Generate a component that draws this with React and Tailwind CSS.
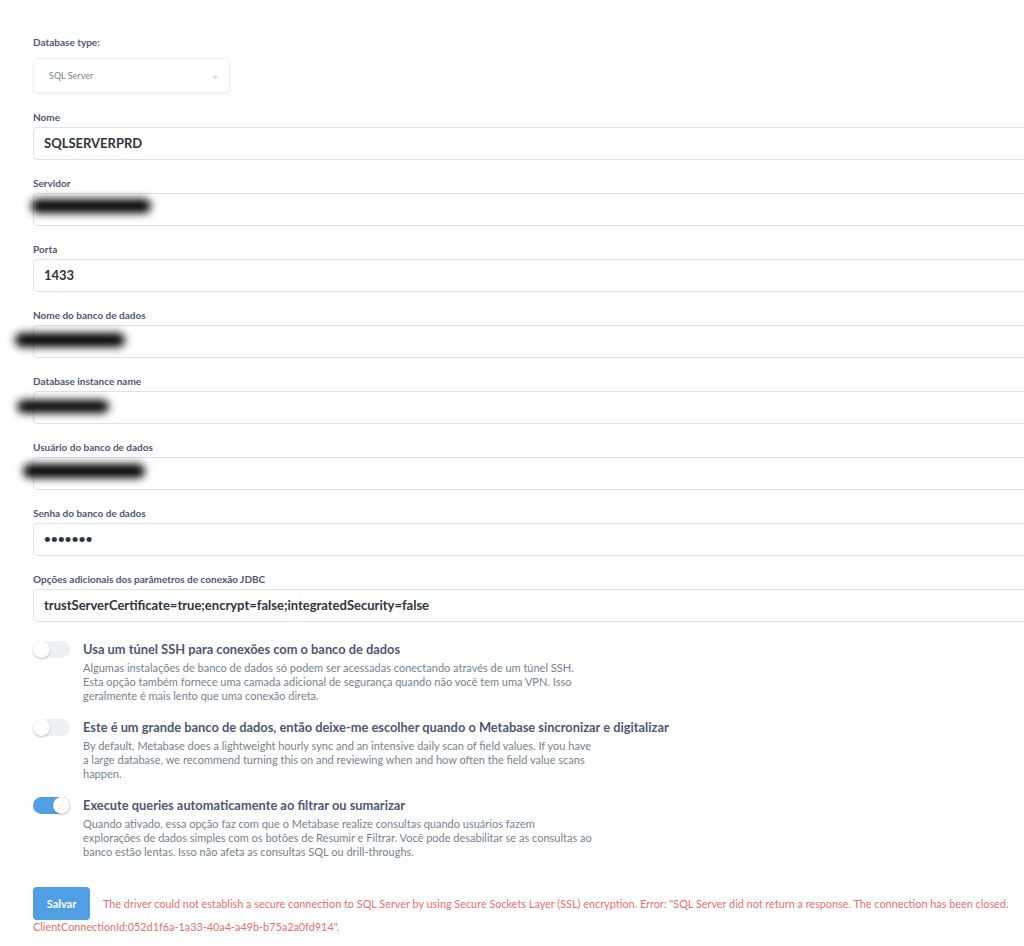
const fields = [
    { label: 'Nome', value: 'SQLSERVERPRD' },
    { label: 'Servidor', blur: { left: -3, top: 5, width: 120, height: 14 } },
    { label: 'Porta', value: '1433' },
    { label: 'Nome do banco de dados', blur: { left: -19, top: 7, width: 110, height: 14 } },
    { label: 'Database instance name', blur: { left: -17, top: 8, width: 92, height: 13 } },
    { label: 'Usuário do banco de dados', blur: { left: -11, top: 6, width: 122, height: 14 } },
    { label: 'Senha do banco de dados', password: true },
    { label: 'Opções adicionais dos parâmetros de conexão JDBC', value: 'trustServerCertificate=true;encrypt=false;integratedSecurity=false' },
]

const toggles = [
    {
        on: false,
        title: 'Usa um túnel SSH para conexões com o banco de dados',
        lines: [
            'Algumas instalações de banco de dados só podem ser acessadas conectando através de um túnel SSH.',
            'Esta opção também fornece uma camada adicional de segurança quando não você tem uma VPN. Isso',
            'geralmente é mais lento que uma conexão direta.',
        ],
    },
    {
        on: false,
        title: 'Este é um grande banco de dados, então deixe-me escolher quando o Metabase sincronizar e digitalizar',
        lines: [
            'By default, Metabase does a lightweight hourly sync and an intensive daily scan of field values. If you have',
            'a large database, we recommend turning this on and reviewing when and how often the field value scans',
            'happen.',
        ],
    },
    {
        on: true,
        title: 'Execute queries automaticamente ao filtrar ou sumarizar',
        lines: [
            'Quando ativado, essa opção faz com que o Metabase realize consultas quando usuários fazem',
            'explorações de dados simples com os botões de Resumir e Filtrar. Você pode desabilitar se as consultas ao',
            'banco estão lentas. Isso não afeta as consultas SQL ou drill-throughs.',
        ],
    },
]

function Label({ children }) {
    return (
        <div className="text-[10px] leading-[14px] font-bold text-[#4c5773]">{children}</div>
    )
}

function Toggle({ on }) {
    return (
        <div className={`relative w-[37px] h-[17px] rounded-full shrink-0 ${on ? 'bg-[#509ee3]' : 'bg-[#eef1f4]'}`}>
            <div
                className={`absolute top-0 w-[17px] h-[17px] rounded-full bg-white shadow-[0_1px_2px_rgba(0,0,0,0.25)] ${on ? 'right-0' : 'left-0'}`}
            />
        </div>
    )
}

export default function App() {
    return (
        <div
            className="w-[1024px] h-[946px] overflow-hidden bg-white pl-[33px] pt-[35px]"
            style={{ fontFamily: 'Lato, "Open Sans", sans-serif' }}
        >
            {/* tipo de banco */}
            <Label>Database type:</Label>
            <div className="mt-[9px] w-[197px] h-[35px] rounded-[5px] border border-[#eef0f2] shadow-[0_1px_3px_rgba(0,0,0,0.08)] flex items-center justify-between pl-[15px] pr-[11px]">
                <span className="text-[9px] text-[#74838f] pt-[1px]">SQL Server</span>
                <svg width="6" height="4" viewBox="0 0 6 4" className="mt-[5px]">
                    <path d="M0 0 L6 0 L3 3.5 Z" fill="#d5dbe0" />
                </svg>
            </div>

            {/* campos */}
            <div className="pt-[1px]">
                {fields.map((f) => (
                    <div key={f.label} className="mt-[16px]">
                        <Label>{f.label}</Label>
                        <div className="relative mt-[3px] w-[1000px] h-[33px] rounded-[4px] border border-[#dfe3e8] flex items-center px-[10px]">
                            {f.value && (
                                <span className="text-[13px] font-bold text-[#2e353b]">{f.value}</span>
                            )}
                            {f.password && (
                                <span
                                    className="text-[19px] leading-none text-[#2e353b] tracking-[0.3px]"
                                    style={{ fontFamily: '"Liberation Sans", sans-serif' }}
                                >
                                    •••••••
                                </span>
                            )}
                            {f.blur && (
                                <div
                                    className="absolute rounded-full bg-black blur-[4px]"
                                    style={{ left: f.blur.left, top: f.blur.top, width: f.blur.width, height: f.blur.height }}
                                />
                            )}
                        </div>
                    </div>
                ))}
            </div>

            {/* opções */}
            <div className="mt-[18px] flex flex-col gap-[15px]">
                {toggles.map((t) => (
                    <div key={t.title} className="flex gap-[13px]">
                        <div className="pt-[1px]">
                            <Toggle on={t.on} />
                        </div>
                        <div>
                            <div className="text-[12.85px] leading-[18px] font-bold text-[#4c5773]">{t.title}</div>
                            <div className="mt-[3px] text-[11px] leading-[14px] text-[#74838f]">
                                {t.lines.map((l, i) => (
                                    <div key={i} className="whitespace-nowrap">{l}</div>
                                ))}
                            </div>
                        </div>
                    </div>
                ))}
            </div>

            {/* salvar */}
            <div className="mt-[28px] w-[990px] text-[10.85px] leading-[14px]">
                <button className="inline-block align-baseline w-[57px] h-[33px] rounded-[4px] bg-[#509ee3] text-white font-bold text-[11px]">
                    Salvar
                </button>
                <span className="ml-[13px] text-[#ed6e6e]">
                    The driver could not establish a secure connection to SQL Server by using Secure Sockets Layer (SSL) encryption. Error: "SQL Server did not return a response. The connection has been closed. ClientConnectionId:052d1f6a-1a33-40a4-a49b-b75a2a0fd914".
                </span>
            </div>
        </div>
    )
}
